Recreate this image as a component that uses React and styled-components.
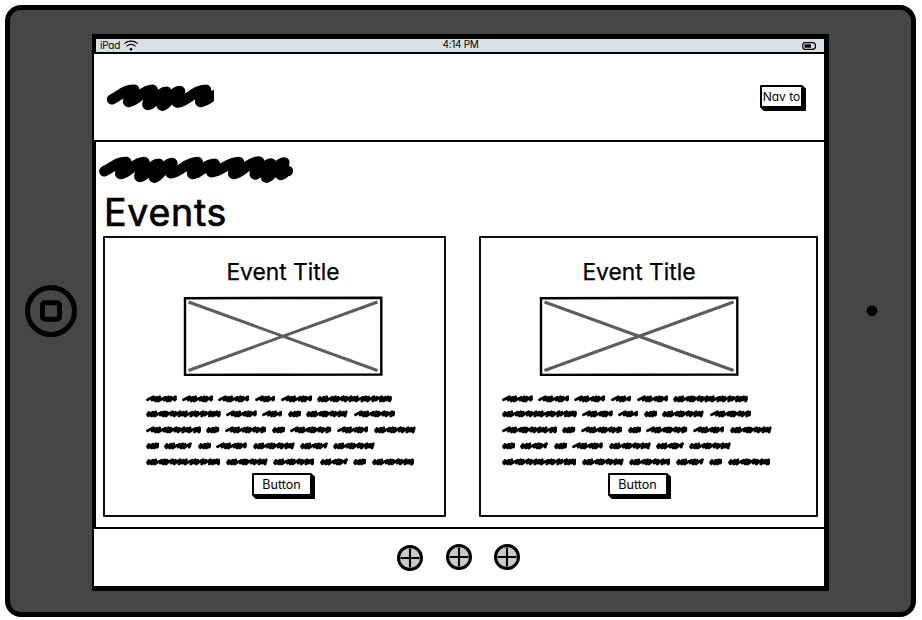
import React from "react";
import styled, { createGlobalStyle } from "styled-components";

const GlobalStyle = createGlobalStyle`
  * { box-sizing: border-box; }
  body { margin: 0; background: #fff; }
  svg { display: block; }
`;

const Page = styled.div`
  width: 922px;
  height: 620px;
  padding: 5px;
  overflow: hidden;
  font-family: Inter, "Liberation Sans", sans-serif;
  font-feature-settings: "cv11", "ss03";
  color: #000;
`;
const Device = styled.div`
  width: 911px;
  height: 612px;
  border: 5px solid #000;
  border-radius: 16px;
  background: #464646;
  display: grid;
  grid-template-columns: 82px 737px 82px;
  padding-top: 24px;
`;
const Bezel = styled.div`
  height: 557px;
  display: flex;
  align-items: center;
  padding: 0 0 3px ${(p) => p.$left}px;
`;
const Screen = styled.main`
  height: 557px;
  background: #000;
  padding: 5px 5px 5px 0;
  display: flex;
  flex-direction: column;
  gap: 2px;
`;
const StatusBar = styled.div`
  height: 13px;
  margin-left: 4px;
  padding: 0 7px 0 4px;
  background: #d8e0e3;
  display: grid;
  grid-template-columns: 1fr auto 1fr;
  align-items: center;
  font-size: 10px;
  line-height: 11px;
`;
const StatusLeft = styled.div`
  display: flex;
  align-items: center;
  gap: 4px;
  height: 11px;
  letter-spacing: -0.25px;
`;
const StatusTime = styled.div`
  height: 13px;
  letter-spacing: -0.3px;
  padding-left: 4px;
`;
const StatusRight = styled.div`
  display: flex;
  justify-content: flex-end;
`;
const Header = styled.header`
  height: 86px;
  margin-left: 2px;
  padding: 0 21px 0 13px;
  background: #fff;
  display: flex;
  justify-content: space-between;
  align-items: center;
`;
const Body = styled.section`
  height: 385px;
  margin-left: 4px;
  padding: 14px 6px 0 2px;
  background: #fff;
`;
const Heading = styled.h1`
  margin: 7px 0 0 6px;
  height: 44px;
  font-size: 37.5px;
  line-height: 44px;
  font-weight: 400;
  letter-spacing: 0.75px;
  -webkit-text-stroke: 0.7px #000;
`;
const Cards = styled.div`
  margin: 1px 0 0 5px;
  display: grid;
  grid-template-columns: 343px 339px;
  gap: 33px;
`;
const Card = styled.article`
  height: 281px;
  border: 2px solid #0b0b0b;
  border-radius: 1px;
  padding: 20px 0 0 ${(p) => p.$inset}px;
`;
const CardContent = styled.div`
  width: 276px;
  display: flex;
  flex-direction: column;
  align-items: center;
`;
const CardTitle = styled.h2`
  margin: 0;
  height: 27px;
  font-size: 22.8px;
  line-height: 27px;
  font-weight: 400;
  white-space: nowrap;
  -webkit-text-stroke: 0.25px #000;
`;
const Placeholder = styled.svg`
  margin: 11px 1px 0 0;
`;
const Paragraph = styled.div`
  width: 276px;
  margin-top: 18.6px;
  padding-left: 0.5px;
`;
const Line = styled.div`
  display: flex;
  gap: 5.3px;
  height: 15.8px;
`;
const SketchButton = styled.button`
  width: ${(p) => p.$width}px;
  height: 23px;
  margin: ${(p) => p.$margin || "0"};
  padding: 1px 0 0;
  border: 2px solid #000;
  border-radius: 1px;
  box-shadow: 1px 1px #000, 2px 2px #000, 3px 3px #000;
  background: #fff;
  color: #000;
  font: inherit;
  font-size: ${(p) => p.$size}px;
  line-height: 18px;
  white-space: nowrap;
`;
const Footer = styled.footer`
  height: 57px;
  margin-left: 2px;
  padding: 15px 0 0 303px;
  background: #fff;
  display: flex;
  gap: 22px;
`;
const RoundIcon = styled.svg`
  margin-top: ${(p) => p.$drop || 0}px;
  margin-right: ${(p) => p.$after || 0}px;
`;

const LOGO = [
  [336, 298], [403, 269], [386, 306], [458, 269], [444, 315], [500, 275],
  [487, 317], [540, 273], [533, 308], [618, 269], [602, 306], [664, 280],
];
const SUBTITLE = [
  [43, 94], [109, 66], [92, 102], [163, 66], [150, 111], [207, 71], [193, 113],
  [247, 69], [243, 100], [323, 66], [308, 102], [374, 71], [365, 97], [447, 66],
  [431, 102], [507, 64], [496, 104], [543, 70], [530, 113], [583, 67], [573, 105], [594, 93],
];

// One pen stroke: forward strokes crest flat, return strokes hook back under them.
const stroke = (points, ox, oy) => {
  const p = points.map(([x, y]) => [(x - ox) / 3, (y - oy) / 3]);
  const n = (v) => v.toFixed(2);
  return p.slice(1).reduce((d, [x, y], i) => {
    const [px, py] = p[i];
    const dx = x - px;
    const dy = y - py;
    const c = i % 2
      ? [px + 1.4, py + 2.6, x - 2.8, y - 1]
      : [px + dx * 0.38, py + dy * (i ? 0.12 : 0.42), x - dx * 0.42, y - (i ? 0 : 0.6)];
    return `${d}C${c.map(n).join(" ")} ${n(x)} ${n(y)}`;
  }, `M${n(p[0][0])} ${n(p[0][1])}`);
};

const STEPS = [6, 4.6, 4.1, 7.2, 4.2, 3.9, 6.6, 4.3];
const wordPath = (width, dense) => {
  const end = width - 1.5;
  let x = 1.5;
  let i = dense ? 1 : 0;
  let d = `M${x} ${dense ? 4.6 : 4.7}`;
  if (dense) {
    d += "L2.9 2.5L2.4 5.8";
    x = 2.4;
  }
  while (x < end - 1.5) {
    const step = STEPS[i % STEPS.length];
    const px = Math.min(x + step, end);
    const top = i % 2 ? 2.2 : 1.8;
    const low = i % 3 === 0 ? 5.1 : 6;
    d += `Q${(x + (px - x) * 0.45).toFixed(2)} ${top + 1.6} ${px.toFixed(2)} ${top}`;
    x = px - 1.3;
    if (px < end) {
      d += `L${x.toFixed(2)} ${low}`;
    } else {
      d += `L${(end - 0.9).toFixed(2)} ${low}L${end} 4.3`;
      break;
    }
    i += 1;
  }
  return d;
};

const WORDS = [
  [[31, 0], [31.3, 0], [31.3, 0], [20.3, 0], [31.3, 0], [75, 1]],
  [[75, 1], [31, 0], [20.3, 0], [13.5, 1], [42, 1], [41.5, 0]],
  [[55.4, 0], [13.4, 1], [41.4, 0], [13.4, 1], [41.4, 0], [31.3, 0], [42, 1]],
  [[13.6, 1], [28, 1], [13.4, 1], [31, 0], [42, 1], [28, 1], [42, 1]],
  [[74.8, 1], [42, 1], [41.6, 1], [28, 1], [13.4, 1], [42.4, 1]],
];

const Word = ({ width, dense }) => (
  <svg width={width} height="8" viewBox={`0 0 ${width} 8`} fill="none" stroke="#000" strokeWidth="2.8" strokeLinecap="round" strokeLinejoin="round">
    <path d={wordPath(width, dense)} />
  </svg>
);

const EventCard = ({ inset }) => (
  <Card $inset={inset}>
    <CardContent>
      <CardTitle>Event Title</CardTitle>
      <Placeholder width="200" height="80" viewBox="0 0 200 80" fill="none">
        <path d="M5.5 6L194.5 74.5M5.5 74.5L194.5 6" stroke="#5d5d5d" strokeWidth="3" />
        <path d="M2 2.2L198.3 1.8V78.5L2 79Z" stroke="#000" strokeWidth="2.4" />
      </Placeholder>
      <Paragraph>
        {WORDS.map((line, i) => (
          <Line key={i}>
            {line.map(([w, dense], j) => <Word key={j} width={w} dense={!!dense} />)}
          </Line>
        ))}
      </Paragraph>
      <SketchButton $width={60} $size={12.6} $margin="-1px 3px 0 0">Button</SketchButton>
    </CardContent>
  </Card>
);

const PlusCircle = ({ drop, after }) => (
  <RoundIcon $drop={drop} $after={after} width="26" height="26" viewBox="0 0 26 26">
    <circle cx="13" cy="13" r="11.5" fill="#c9c9c9" stroke="#000" strokeWidth="3" />
    <path d="M13 3.5V22.5M3.5 13H22.5" stroke="#000" strokeWidth="2.1" />
  </RoundIcon>
);

export default function App() {
  return (
    <>
      <GlobalStyle />
      <Page>
        <Device>
          <Bezel $left={15}>
            <svg width="52" height="52" viewBox="0 0 52 52" fill="none" stroke="#000" strokeWidth="5">
              <circle cx="26" cy="26" r="23.5" />
              <rect x="17.5" y="17.8" width="17" height="16.5" rx="2.5" />
            </svg>
          </Bezel>
          <Screen>
            <StatusBar>
              <StatusLeft>
                iPad
                <svg width="14" height="11" viewBox="0 0 14 11" fill="none" stroke="#000" strokeWidth="1.1" strokeLinecap="round">
                  <path d="M.7 3.4C4 .4 10 .4 13.3 3.4M2.8 6C5.3 4.1 8.7 4.1 11.2 6" />
                  <circle cx="7" cy="9.3" r="1.2" fill="#000" stroke="none" />
                </svg>
              </StatusLeft>
              <StatusTime>4:14 PM</StatusTime>
              <StatusRight>
                <svg width="15" height="8" viewBox="0 0 15 8">
                  <path d="M2.5 .7H11L12 1.2Q13.5 1.3 13.5 4T12 6.8L11 7.3H2.5Q.7 7.3 .7 4T2.5 .7Z" fill="none" stroke="#000" strokeWidth="1.2" />
                  <rect x="2.5" y="2.3" width="6.5" height="3.4" fill="#000" />
                </svg>
              </StatusRight>
            </StatusBar>
            <Header>
              <svg width="107" height="30" viewBox="0 0 107 30" fill="none">
                <path d={stroke(LOGO, 321, 246)} stroke="#000" strokeWidth="10.4" strokeLinecap="round" strokeLinejoin="round" />
              </svg>
              <SketchButton $width={43} $size={12} $margin="0 0 2px">Nav to</SketchButton>
            </Header>
            <Body>
              <svg width="196" height="28" viewBox="0 0 196 28" fill="none">
                <path d={stroke(SUBTITLE, 24, 48)} stroke="#000" strokeWidth="10.4" strokeLinecap="round" strokeLinejoin="round" />
              </svg>
              <Heading>Events</Heading>
              <Cards>
                <EventCard inset={40} />
                <EventCard inset={20} />
              </Cards>
            </Body>
            <Footer>
              <PlusCircle drop={1} after={1} />
              <PlusCircle />
              <PlusCircle />
            </Footer>
          </Screen>
          <Bezel $left={37}>
            <svg width="12" height="12" viewBox="0 0 12 12">
              <circle cx="6" cy="5.8" r="5.4" />
            </svg>
          </Bezel>
        </Device>
      </Page>
    </>
  );
}
